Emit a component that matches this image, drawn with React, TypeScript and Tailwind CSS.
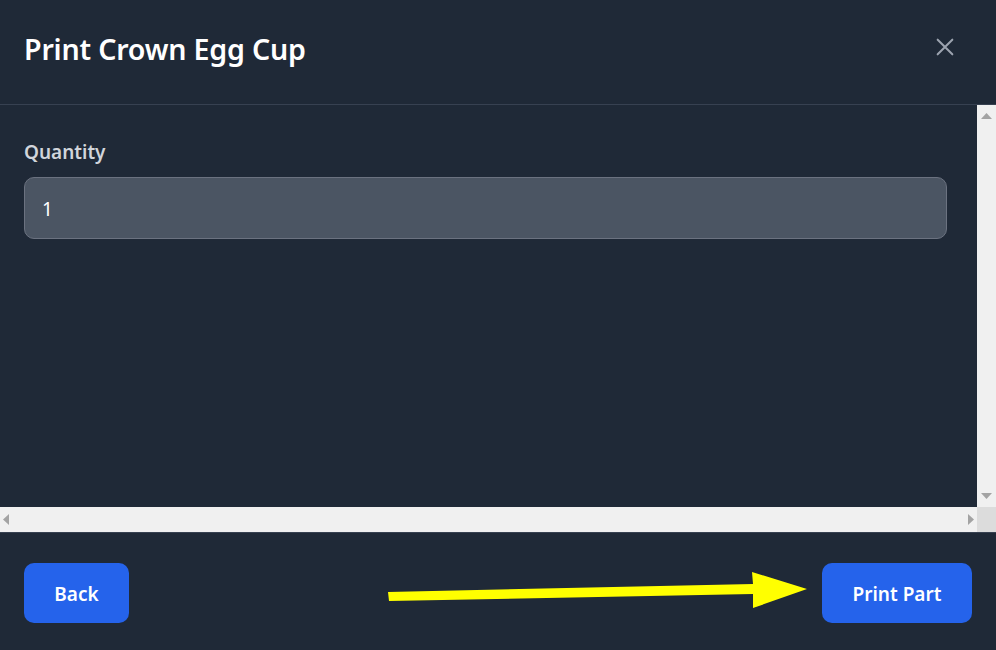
export default function App() {
  return (
    <div className="relative flex h-[650px] w-[996px] flex-col bg-[#1f2937] font-['Noto_Sans',sans-serif] text-white">
      {/* Header */}
      <div className="flex h-[105px] shrink-0 items-center justify-between border-b border-[#374151] pl-[24px] pr-[40px]">
        <h1 className="pb-[6px] text-[28.6px] font-semibold tracking-[-0.2px] text-white">Print Crown Egg Cup</h1>
        <button className="mb-[10px] text-[#9ca3af]">
          <svg width="22" height="22" viewBox="0 0 24 24" fill="none" stroke="currentColor" strokeWidth="2.2" strokeLinecap="round">
            <path d="M4 4L20 20M20 4L4 20" />
          </svg>
        </button>
      </div>

      {/* Scroll area */}
      <div className="flex h-[402px] shrink-0">
        <div className="flex-1 px-[24px] pt-[33px]">
          <label className="block text-[19px] font-semibold text-[#d1d5db]">Quantity</label>
          <div className="mt-[10px] flex h-[62px] w-[923px] items-center rounded-[10px] border border-[#6b7280] bg-[#4b5563] px-[17px] pt-[3px] text-[19px] text-white">
            1
          </div>
        </div>
        <div className="flex w-[19px] flex-col items-center justify-between bg-[#f0f0f0] py-[8px]">
          <svg width="11" height="6" viewBox="0 0 11 6"><path d="M5.5 0L11 6H0Z" fill="#a3a3a3" /></svg>
          <svg width="11" height="6" viewBox="0 0 11 6"><path d="M0 0H11L5.5 6Z" fill="#a3a3a3" /></svg>
        </div>
      </div>
      <div className="flex h-[25px] shrink-0">
        <div className="flex flex-1 items-center justify-between bg-[#f0f0f0] px-[3px]">
          <svg width="6" height="11" viewBox="0 0 6 11"><path d="M6 0V11L0 5.5Z" fill="#a3a3a3" /></svg>
          <svg width="6" height="11" viewBox="0 0 6 11"><path d="M0 0L6 5.5L0 11Z" fill="#a3a3a3" /></svg>
        </div>
        <div className="w-[19px] bg-[#dcdcdc]" />
      </div>

      {/* Footer */}
      <div className="flex flex-1 items-start justify-between border-t border-[#374151] px-[24px] pt-[30px]">
        <button className="h-[60px] w-[105px] rounded-[10px] bg-[#2563eb] pt-[3px] text-[19px] font-semibold text-white">Back</button>
        <button className="h-[60px] w-[150px] rounded-[10px] bg-[#2563eb] pt-[3px] text-[19px] font-semibold text-white">Print Part</button>
      </div>

      {/* Annotation arrow */}
      <svg className="pointer-events-none absolute left-0 top-0" width="996" height="650" viewBox="0 0 996 650">
        <polygon points="388,592 753,584 752,572 807,589 753,608 753,594 389,601" fill="#ffff00" />
      </svg>
    </div>
  )
}
